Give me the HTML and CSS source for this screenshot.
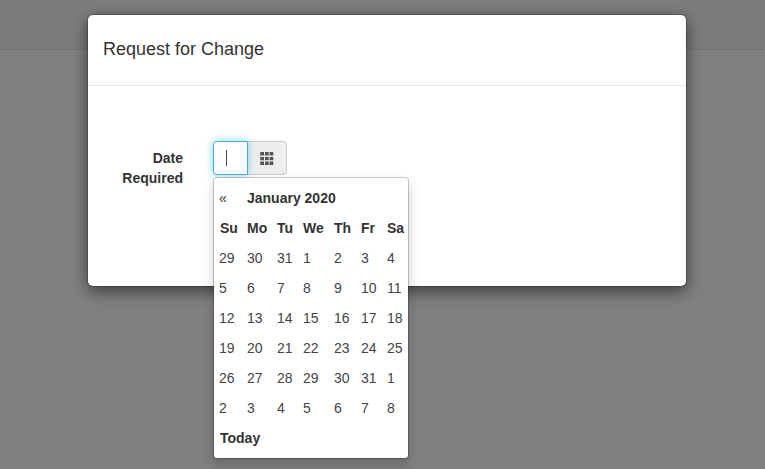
FILE: index.html
```html
<!DOCTYPE html>
<html lang="en">
<head>
<meta charset="utf-8">
<title>Request for Change</title>
<link rel="stylesheet" href="styles.css">
</head>
<body>
<div class="navbar"></div>
<div class="modal" role="dialog">
  <div class="modal-header"><h4 class="modal-title">Request for Change</h4></div>
  <div class="modal-body">
    <div class="form-group">
      <label class="control-label">Date Required</label>
      <div class="input-group">
        <div class="form-control"><span class="caret"></span></div>
        <div class="addon">
          <svg width="14" height="14" viewBox="0 0 14 14" fill="#555">
            <path d="M.2 1h3.8v3.6H.2zM5 1h3.7v3.6H5zM9.6 1h3.7v3.6H9.6zM.2 6h3.8v3.3H.2zM5 6h3.7v3.3H5zM9.6 6h3.7v3.3H9.6zM.2 10.6h3.8V14H.2zM5 10.6h3.7V14H5zM9.6 10.6h3.7V14H9.6z"/>
          </svg>
        </div>
        <div class="datepicker">
          <table>
            <colgroup><col class="c1"><col class="c2"><col class="c3"><col class="c4"><col class="c5"><col class="c6"><col class="c7"></colgroup>
            <thead>
              <tr><th class="prev">«</th><th colspan="6">January 2020</th></tr>
              <tr class="days"><th>Su</th><th>Mo</th><th>Tu</th><th>We</th><th>Th</th><th>Fr</th><th>Sa</th></tr>
            </thead>
            <tbody>
              <tr><td>29</td><td>30</td><td>31</td><td>1</td><td>2</td><td>3</td><td>4</td></tr>
              <tr><td>5</td><td>6</td><td>7</td><td>8</td><td>9</td><td>10</td><td>11</td></tr>
              <tr><td>12</td><td>13</td><td>14</td><td>15</td><td>16</td><td>17</td><td>18</td></tr>
              <tr><td>19</td><td>20</td><td>21</td><td>22</td><td>23</td><td>24</td><td>25</td></tr>
              <tr><td>26</td><td>27</td><td>28</td><td>29</td><td>30</td><td>31</td><td>1</td></tr>
              <tr><td>2</td><td>3</td><td>4</td><td>5</td><td>6</td><td>7</td><td>8</td></tr>
            </tbody>
            <tfoot><tr><th class="today" colspan="7">Today</th></tr></tfoot>
          </table>
        </div>
      </div>
    </div>
  </div>
</div>
</body>
</html>
```
FILE: styles.css
```css
* { box-sizing: border-box; }
html, body { height: 100%; overflow: hidden; }
body {
  margin: 0;
  background: #808080;
  color: #333;
  font: 14px/20px "Liberation Sans", Arial, sans-serif;
}
.navbar {
  height: 50px;
  background: #7c7c7c;
  border-bottom: 1px solid #737373;
}
.modal {
  position: absolute;
  top: 14px;
  left: 87px;
  width: 600px;
  height: 273px;
  background: #fff;
  background-clip: padding-box;
  border: 1px solid rgba(0, 0, 0, .2);
  border-radius: 6px;
  box-shadow: 0 5px 15px rgba(0, 0, 0, .5);
}
.modal-header {
  height: 71px;
  padding: 20px 15px;
  border-bottom: 1px solid #e5e5e5;
}
.modal-title {
  margin: 0;
  font-size: 18px;
  font-weight: 400;
  line-height: 28px;
}
.modal-body { padding: 55px 15px 0; }
.form-group { display: flex; gap: 30px; }
.control-label {
  width: 80px;
  padding-top: 7px;
  font-weight: 700;
  text-align: right;
}
.input-group { position: relative; display: flex; height: 34px; }
.form-control {
  position: relative;
  z-index: 1;
  width: 35px;
  padding: 8px 12px;
  background: #fff;
  border: 1px solid #3fb0e8;
  border-radius: 4px 0 0 4px;
  box-shadow: 0 0 8px rgba(63, 176, 232, .6);
}
.caret { display: block; width: 1px; height: 16px; background: #444; }
.addon {
  width: 39px;
  padding: 9px 12px;
  background: #eee;
  border: 1px solid #ccc;
  border-left: 0;
  border-radius: 0 4px 4px 0;
}
.addon svg { display: block; }
.datepicker {
  position: absolute;
  z-index: 2;
  top: 36px;
  left: 0;
  width: 196px;
  padding: 5px 0;
  background: #fff;
  background-clip: padding-box;
  border: 1px solid rgba(0, 0, 0, .2);
  border-radius: 4px;
  box-shadow: 0 6px 12px rgba(0, 0, 0, .175);
}
table { width: 194px; table-layout: fixed; border-collapse: collapse; }
th, td {
  height: 30px;
  padding: 5px 0 5px 5px;
  text-align: left;
  white-space: nowrap;
}
td { color: #444; }
.prev { font-weight: 400; }
.today, .days th:first-child { padding-left: 6px; }
.c1 { width: 28px; }
.c2 { width: 30px; }
.c3 { width: 26px; }
.c4 { width: 31px; }
.c5 { width: 27px; }
.c6 { width: 26px; }
.c7 { width: 26px; }
```
